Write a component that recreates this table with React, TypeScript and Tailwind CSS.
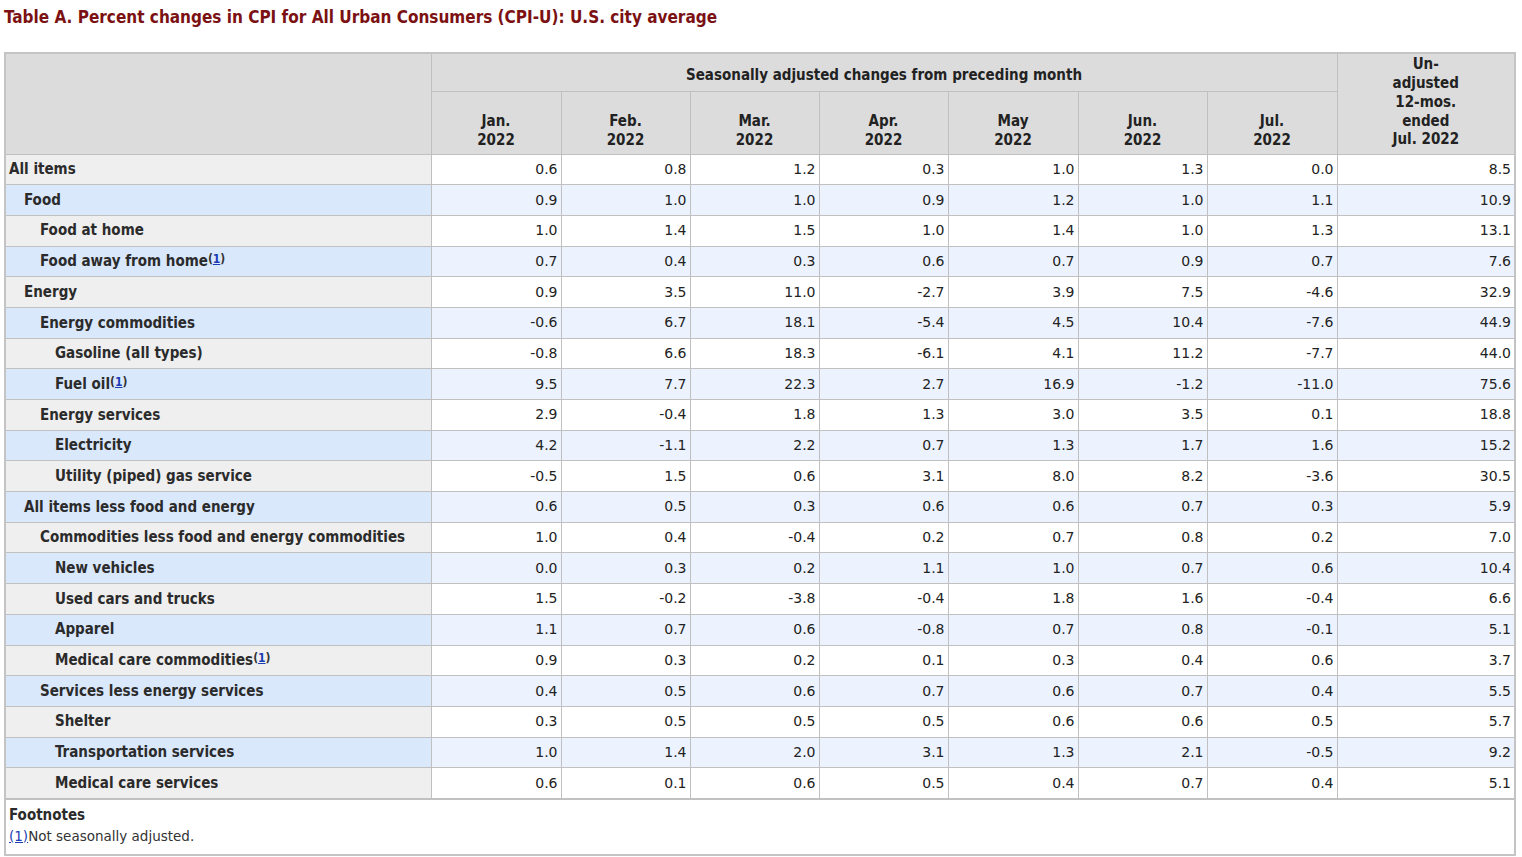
import React from "react";

type Row = { label: string; level: number; note?: boolean; vals: string[] };

const rows: Row[] = [
  { label: "All items", level: 0, vals: ["0.6", "0.8", "1.2", "0.3", "1.0", "1.3", "0.0", "8.5"] },
  { label: "Food", level: 1, vals: ["0.9", "1.0", "1.0", "0.9", "1.2", "1.0", "1.1", "10.9"] },
  { label: "Food at home", level: 2, vals: ["1.0", "1.4", "1.5", "1.0", "1.4", "1.0", "1.3", "13.1"] },
  { label: "Food away from home", level: 2, note: true, vals: ["0.7", "0.4", "0.3", "0.6", "0.7", "0.9", "0.7", "7.6"] },
  { label: "Energy", level: 1, vals: ["0.9", "3.5", "11.0", "-2.7", "3.9", "7.5", "-4.6", "32.9"] },
  { label: "Energy commodities", level: 2, vals: ["-0.6", "6.7", "18.1", "-5.4", "4.5", "10.4", "-7.6", "44.9"] },
  { label: "Gasoline (all types)", level: 3, vals: ["-0.8", "6.6", "18.3", "-6.1", "4.1", "11.2", "-7.7", "44.0"] },
  { label: "Fuel oil", level: 3, note: true, vals: ["9.5", "7.7", "22.3", "2.7", "16.9", "-1.2", "-11.0", "75.6"] },
  { label: "Energy services", level: 2, vals: ["2.9", "-0.4", "1.8", "1.3", "3.0", "3.5", "0.1", "18.8"] },
  { label: "Electricity", level: 3, vals: ["4.2", "-1.1", "2.2", "0.7", "1.3", "1.7", "1.6", "15.2"] },
  { label: "Utility (piped) gas service", level: 3, vals: ["-0.5", "1.5", "0.6", "3.1", "8.0", "8.2", "-3.6", "30.5"] },
  { label: "All items less food and energy", level: 1, vals: ["0.6", "0.5", "0.3", "0.6", "0.6", "0.7", "0.3", "5.9"] },
  { label: "Commodities less food and energy commodities", level: 2, vals: ["1.0", "0.4", "-0.4", "0.2", "0.7", "0.8", "0.2", "7.0"] },
  { label: "New vehicles", level: 3, vals: ["0.0", "0.3", "0.2", "1.1", "1.0", "0.7", "0.6", "10.4"] },
  { label: "Used cars and trucks", level: 3, vals: ["1.5", "-0.2", "-3.8", "-0.4", "1.8", "1.6", "-0.4", "6.6"] },
  { label: "Apparel", level: 3, vals: ["1.1", "0.7", "0.6", "-0.8", "0.7", "0.8", "-0.1", "5.1"] },
  { label: "Medical care commodities", level: 3, note: true, vals: ["0.9", "0.3", "0.2", "0.1", "0.3", "0.4", "0.6", "3.7"] },
  { label: "Services less energy services", level: 2, vals: ["0.4", "0.5", "0.6", "0.7", "0.6", "0.7", "0.4", "5.5"] },
  { label: "Shelter", level: 3, vals: ["0.3", "0.5", "0.5", "0.5", "0.6", "0.6", "0.5", "5.7"] },
  { label: "Transportation services", level: 3, vals: ["1.0", "1.4", "2.0", "3.1", "1.3", "2.1", "-0.5", "9.2"] },
  { label: "Medical care services", level: 3, vals: ["0.6", "0.1", "0.6", "0.5", "0.4", "0.7", "0.4", "5.1"] },
];

const months = ["Jan.", "Feb.", "Mar.", "Apr.", "May", "Jun.", "Jul."];

const indent = ["pl-[3px]", "pl-[18px]", "pl-[34px]", "pl-[49px]"];

const cond = "font-['DejaVu_Sans_Condensed','DejaVu_Sans',sans-serif]";

function Note() {
  return (
    <span className="text-[12px] font-bold text-[#333] leading-none align-[3px]">
      (<span className="text-[#1a3db5] underline">1</span>)
    </span>
  );
}

export default function App() {
  return (
    <div className="bg-white min-h-screen pl-[4px] pt-[5px] text-[#333]">
      <h1 className={`${cond} text-[17px] font-bold text-[#7b1113] leading-[24px] mb-[23px]`}>
        Table A. Percent changes in CPI for All Urban Consumers (CPI-U): U.S. city average
      </h1>
      <div className="w-[1512px] border-2 border-[#c4c4c4]">
        <table className="w-full border-collapse table-fixed">
          <colgroup>
            <col className="w-[425px]" />
            <col className="w-[130px]" />
            <col className="w-[129px]" />
            <col className="w-[129px]" />
            <col className="w-[129px]" />
            <col className="w-[130px]" />
            <col className="w-[129px]" />
            <col className="w-[130px]" />
            <col />
          </colgroup>
          <thead className={`${cond} font-bold text-[15px] text-[#222]`}>
            <tr className="h-[37px]">
              <th rowSpan={2} className="bg-[#dcdcdc] border border-[#c0c0c0] border-t-0 border-l-0"></th>
              <th colSpan={7} className="bg-[#dcdcdc] border border-[#c0c0c0] border-t-0 font-bold pt-[5px]">
                Seasonally adjusted changes from preceding month
              </th>
              <th rowSpan={2} className="bg-[#dcdcdc] border border-[#c0c0c0] border-t-0 border-r-0 leading-[18.8px] pb-[3px]">
                Un-
                <br />
                adjusted
                <br />
                12-mos.
                <br />
                ended
                <br />
                Jul. 2022
              </th>
            </tr>
            <tr className="h-[63px]">
              {months.map((m) => (
                <th key={m} className="bg-[#dcdcdc] border border-[#c0c0c0] align-bottom pb-[4px] leading-[19px]">
                  {m}
                  <br />
                  2022
                </th>
              ))}
            </tr>
          </thead>
          <tbody className="font-['DejaVu_Sans',sans-serif] text-[14px]">
            {rows.map((r, i) => {
              const blue = i % 2 === 1;
              return (
                <tr key={r.label} className="h-[30.7px]">
                  <th
                    className={`${cond} ${indent[r.level]} text-left font-bold text-[15px] text-[#2b2b2b] border border-[#c0c0c0] border-l-0 ${
                      blue ? "bg-[#dae8fc]" : "bg-[#efefef]"
                    }`}
                  >
                    {r.label}
                    {r.note && <Note />}
                  </th>
                  {r.vals.map((v, j) => (
                    <td
                      key={j}
                      className={`text-right pr-[3px] text-[#222] border border-[#c0c0c0] ${j === 7 ? "border-r-0" : ""} ${
                        blue ? "bg-[#edf3fe]" : "bg-white"
                      }`}
                    >
                      {v}
                    </td>
                  ))}
                </tr>
              );
            })}
          </tbody>
        </table>
        <div className="px-[3px] pt-[5px] pb-[7px] border-t border-[#c0c0c0]">
          <div className={`${cond} font-bold text-[15px] text-[#2b2b2b] leading-[20px]`}>Footnotes</div>
          <div className="font-['DejaVu_Sans',sans-serif] text-[13.5px] text-[#333] leading-[22px]">
            <span className="text-[#1a3db5] underline">(1)</span>Not seasonally adjusted.
          </div>
        </div>
      </div>
    </div>
  );
}
